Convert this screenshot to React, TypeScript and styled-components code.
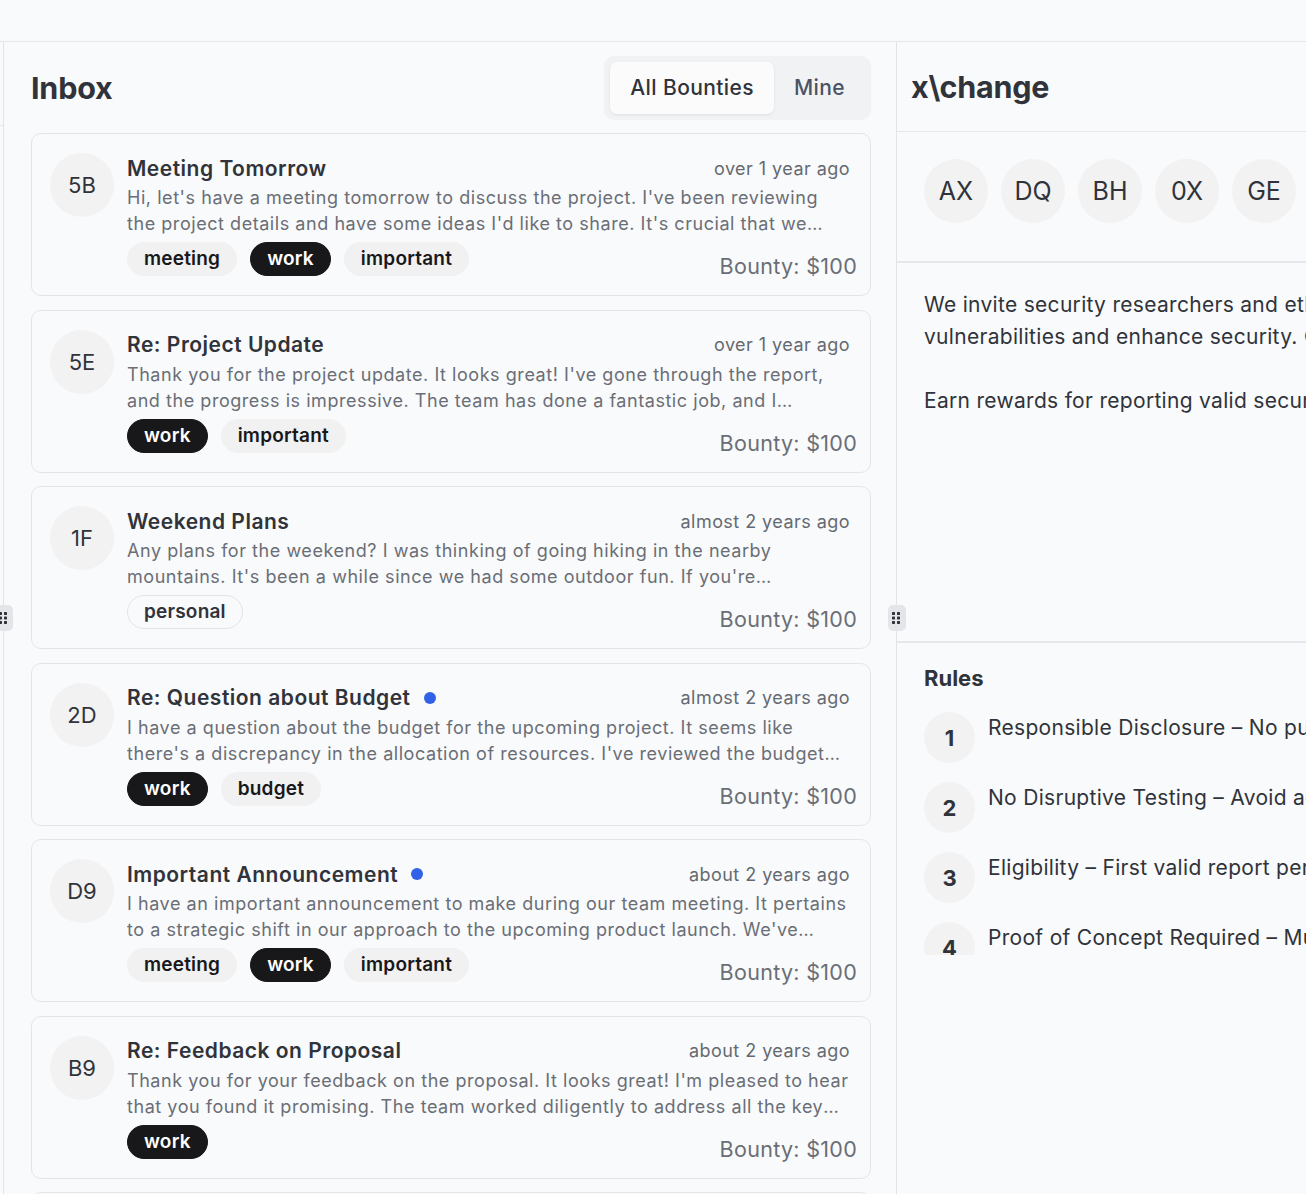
import React from "react";
import styled, { createGlobalStyle } from "styled-components";

const GlobalStyle = createGlobalStyle`
  html, body {
    margin: 0;
    padding: 0;
    background: #f9fafb;
    font-family: Inter, "Noto Sans", "Liberation Sans", sans-serif;
    color: #30333a;
    overflow: hidden;
  }
  * { box-sizing: border-box; }
`;

const Page = styled.div`
  width: 100vw;
  height: 100vh;
  display: flex;
  flex-direction: column;
  overflow: hidden;
`;

const TopBar = styled.div`
  height: 42px;
  flex-shrink: 0;
  border-bottom: 1px solid #e5e7eb;
`;

const Main = styled.div`
  flex: 1;
  display: flex;
  min-height: 0;
  overflow: hidden;
`;

const SidePanel = styled.div`
  width: 3px;
  flex-shrink: 0;
  display: flex;
  flex-direction: column;
`;

const SideHeader = styled.div`
  height: 84px;
  border-bottom: 1px solid #e5e7eb;
`;

const Divider = styled.div`
  width: 1px;
  flex-shrink: 0;
  background: #e2e4e7;
  position: relative;
`;

const Handle = styled.div`
  position: absolute;
  top: 50%;
  left: 50%;
  transform: translate(-50%, -50%);
  width: 18px;
  height: 26px;
  border-radius: 5px;
  background: #e4e5e8;
  display: flex;
  align-items: center;
  justify-content: center;
  z-index: 2;
`;

const InboxPanel = styled.div`
  width: 892px;
  flex-shrink: 0;
  display: flex;
  flex-direction: column;
  padding: 0 25px 0 27px;
  overflow: hidden;
`;

const InboxHeader = styled.div`
  height: 91px;
  flex-shrink: 0;
  display: flex;
  align-items: center;
  justify-content: space-between;
`;

const PanelTitle = styled.h1`
  margin: 0;
  font-size: 30.5px;
  line-height: 40px;
  font-weight: 700;
  color: #30333a;
  letter-spacing: -0.2px;
`;

const Tabs = styled.div`
  display: flex;
  height: 64px;
  padding: 6px;
  border-radius: 10px;
  background: #f1f2f4;
`;

const Tab = styled.button<{ $active?: boolean }>`
  border: none;
  font-family: inherit;
  height: 52px;
  padding: 0 20px;
  border-radius: 7px;
  font-size: 21px;
  letter-spacing: 0.4px;
  font-weight: 500;
  cursor: pointer;
  color: ${(p) => (p.$active ? "#30333a" : "#4a5366")};
  background: ${(p) => (p.$active ? "#fbfbfc" : "transparent")};
  box-shadow: ${(p) => (p.$active ? "0 1px 3px rgba(0,0,0,0.08)" : "none")};
`;

const CardList = styled.div`
  display: flex;
  flex-direction: column;
  gap: 13.5px;
`;

const Card = styled.div`
  flex-shrink: 0;
  display: flex;
  gap: 13px;
  padding: 19px 20px 19px 18px;
  border: 1px solid #e4e5e7;
  border-radius: 10px;
  background: #f9fafb;
`;

const Avatar = styled.div<{ $size: number; $font: number }>`
  width: ${(p) => p.$size}px;
  height: ${(p) => p.$size}px;
  flex-shrink: 0;
  border-radius: 50%;
  background: #f2f2f3;
  display: flex;
  align-items: center;
  justify-content: center;
  font-size: ${(p) => p.$font}px;
  color: #30333a;
`;

const CardBody = styled.div`
  flex: 1;
  min-width: 0;
  display: flex;
  flex-direction: column;
`;

const CardHead = styled.div`
  display: flex;
  align-items: center;
  justify-content: space-between;
  height: 30px;
`;

const TitleWrap = styled.div`
  display: flex;
  align-items: center;
  gap: 13px;
`;

const CardTitle = styled.span`
  font-size: 21px;
  letter-spacing: 0.5px;
  font-weight: 600;
  color: #30333a;
`;

const UnreadDot = styled.span`
  width: 12px;
  height: 12px;
  border-radius: 50%;
  background: #2f62e6;
`;

const Time = styled.span`
  font-size: 18px;
  letter-spacing: 0.45px;
  color: #656a72;
`;

const Preview = styled.p`
  margin: 2px 0 0;
  font-size: 18px;
  letter-spacing: 0.55px;
  line-height: 26px;
  color: #6a6e76;
  display: -webkit-box;
  -webkit-line-clamp: 2;
  -webkit-box-orient: vertical;
  overflow: hidden;
`;

const CardFoot = styled.div`
  margin-top: 5px;
  display: flex;
  align-items: flex-end;
  justify-content: space-between;
`;

const Tags = styled.div`
  display: flex;
  gap: 13px;
`;

const Tag = styled.span<{ $variant: "dark" | "light" | "outline" }>`
  height: 34px;
  line-height: 32px;
  padding: 0 16px;
  border-radius: 17px;
  font-size: 19px;
  letter-spacing: 0.2px;
  font-weight: 600;
  border: 1px solid
    ${(p) => (p.$variant === "dark" ? "#18181b" : p.$variant === "outline" ? "#e4e5e7" : "#f1f1f2")};
  background: ${(p) => (p.$variant === "dark" ? "#18181b" : p.$variant === "outline" ? "transparent" : "#f1f1f2")};
  color: ${(p) => (p.$variant === "dark" ? "#ffffff" : p.$variant === "outline" ? "#30333a" : "#18181b")};
`;

const Bounty = styled.span`
  font-size: 21.5px;
  letter-spacing: 0.3px;
  line-height: 20px;
  color: #6a6e76;
  margin-right: -7px;
`;

const DetailPanel = styled.div`
  width: 760px;
  flex-shrink: 0;
  display: flex;
  flex-direction: column;
`;

const DetailHeader = styled.div`
  height: 90px;
  flex-shrink: 0;
  display: flex;
  align-items: center;
  padding: 0 14px;
  border-bottom: 1px solid #e5e7eb;
`;

const AvatarRow = styled.div`
  flex-shrink: 0;
  display: flex;
  gap: 13px;
  padding: 27px 27px 38px;
  border-bottom: 2px solid #e5e7eb;
`;

const Description = styled.div`
  height: 380px;
  flex-shrink: 0;
  padding: 26px 27px;
  border-bottom: 2px solid #e5e7eb;
`;

const Para = styled.p`
  margin: 0 0 32px;
  font-size: 21px;
  letter-spacing: 0.3px;
  line-height: 32px;
  color: #30333a;
  white-space: nowrap;
`;

const RulesSection = styled.div`
  height: 312px;
  flex-shrink: 0;
  overflow: hidden;
  padding: 20px 27px 0;
`;

const RulesTitle = styled.h2`
  margin: 0 0 19px;
  font-size: 22px;
  line-height: 30px;
  font-weight: 700;
  color: #30333a;
`;

const RulesList = styled.ol`
  list-style: none;
  margin: 0;
  padding: 0;
  display: flex;
  flex-direction: column;
  gap: 19px;
`;

const RuleItem = styled.li`
  display: flex;
  align-items: flex-start;
  gap: 13px;
`;

const RuleNum = styled.span`
  width: 51px;
  height: 51px;
  flex-shrink: 0;
  border-radius: 50%;
  background: #f2f2f3;
  display: flex;
  align-items: center;
  justify-content: center;
  font-size: 22px;
  font-weight: 700;
  color: #30333a;
`;

const RuleText = styled.span`
  font-size: 21px;
  letter-spacing: 0.3px;
  line-height: 32px;
  color: #30333a;
  white-space: nowrap;
`;

const Grip = () => (
  <svg width="9" height="12" viewBox="0 0 9 12" fill="#2b2e35">
    {[0, 1, 2].map((r) =>
      [0, 1].map((c) => <rect key={`${r}${c}`} x={c * 5} y={r * 4.5} width="3" height="3" rx="0.8" />)
    )}
  </svg>
);

type TagV = "dark" | "light" | "outline";
const mails: {
  id: string;
  title: string;
  time: string;
  unread?: boolean;
  text: string;
  tags: [string, TagV][];
}[] = [
  {
    id: "5B",
    title: "Meeting Tomorrow",
    time: "over 1 year ago",
    text:
      "Hi, let's have a meeting tomorrow to discuss the project. I've been reviewing the project details and have some ideas I'd like to share. It's crucial that we align on our next steps to ensure the project's success.",
    tags: [
      ["meeting", "light"],
      ["work", "dark"],
      ["important", "light"],
    ],
  },
  {
    id: "5E",
    title: "Re: Project Update",
    time: "over 1 year ago",
    text:
      "Thank you for the project update. It looks great! I've gone through the report, and the progress is impressive. The team has done a fantastic job, and I appreciate the hard work everyone has put in.",
    tags: [
      ["work", "dark"],
      ["important", "light"],
    ],
  },
  {
    id: "1F",
    title: "Weekend Plans",
    time: "almost 2 years ago",
    text:
      "Any plans for the weekend? I was thinking of going hiking in the nearby mountains. It's been a while since we had some outdoor fun. If you're interested, let me know, and we can plan the details.",
    tags: [["personal", "outline"]],
  },
  {
    id: "2D",
    title: "Re: Question about Budget",
    time: "almost 2 years ago",
    unread: true,
    text:
      "I have a question about the budget for the upcoming project. It seems like there's a discrepancy in the allocation of resources. I've reviewed the budget report and identified a few areas where we might be able to optimize.",
    tags: [
      ["work", "dark"],
      ["budget", "light"],
    ],
  },
  {
    id: "D9",
    title: "Important Announcement",
    time: "about 2 years ago",
    unread: true,
    text:
      "I have an important announcement to make during our team meeting. It pertains to a strategic shift in our approach to the upcoming product launch. We've received valuable feedback from our beta testers.",
    tags: [
      ["meeting", "light"],
      ["work", "dark"],
      ["important", "light"],
    ],
  },
  {
    id: "B9",
    title: "Re: Feedback on Proposal",
    time: "about 2 years ago",
    text:
      "Thank you for your feedback on the proposal. It looks great! I'm pleased to hear that you found it promising. The team worked diligently to address all the key points you raised.",
    tags: [["work", "dark"]],
  },
  {
    id: "7C",
    title: "New Project Idea",
    time: "about 2 years ago",
    text:
      "I have an exciting new project idea to discuss with you. It involves expanding our services to target a niche market that has shown considerable growth in recent months.",
    tags: [["meeting", "light"]],
  },
];

const hunters = ["AX", "DQ", "BH", "0X", "GE", "KR", "MT"];

const rules = [
  "Responsible Disclosure – No public disclosure before the issue is resolved.",
  "No Disruptive Testing – Avoid actions that degrade service availability.",
  "Eligibility – First valid report per vulnerability receives the reward.",
  "Proof of Concept Required – Must include clear reproduction steps.",
  "Scope – Only listed assets are eligible for rewards.",
];

export default function App() {
  return (
    <>
      <GlobalStyle />
      <Page>
        <TopBar />
        <Main>
          <SidePanel>
            <SideHeader />
          </SidePanel>
          <Divider>
            <Handle>
              <Grip />
            </Handle>
          </Divider>
          <InboxPanel>
            <InboxHeader>
              <PanelTitle>Inbox</PanelTitle>
              <Tabs>
                <Tab $active>All Bounties</Tab>
                <Tab>Mine</Tab>
              </Tabs>
            </InboxHeader>
            <CardList>
              {mails.map((m) => (
                <Card key={m.id}>
                  <Avatar $size={64} $font={22}>
                    {m.id}
                  </Avatar>
                  <CardBody>
                    <CardHead>
                      <TitleWrap>
                        <CardTitle>{m.title}</CardTitle>
                        {m.unread && <UnreadDot />}
                      </TitleWrap>
                      <Time>{m.time}</Time>
                    </CardHead>
                    <Preview>{m.text}</Preview>
                    <CardFoot>
                      <Tags>
                        {m.tags.map(([t, v]) => (
                          <Tag key={t} $variant={v}>
                            {t}
                          </Tag>
                        ))}
                      </Tags>
                      <Bounty>Bounty: $100</Bounty>
                    </CardFoot>
                  </CardBody>
                </Card>
              ))}
            </CardList>
          </InboxPanel>
          <Divider>
            <Handle>
              <Grip />
            </Handle>
          </Divider>
          <DetailPanel>
            <DetailHeader>
              <PanelTitle>x\change</PanelTitle>
            </DetailHeader>
            <AvatarRow>
              {hunters.map((h) => (
                <Avatar key={h} $size={64} $font={25}>
                  {h}
                </Avatar>
              ))}
            </AvatarRow>
            <Description>
              <Para>
                We invite security researchers and ethical hackers to help us identify
                <br />
                vulnerabilities and enhance security. Our program is open to everyone.
              </Para>
              <Para>Earn rewards for reporting valid security issues in our products.</Para>
            </Description>
            <RulesSection>
              <RulesTitle>Rules</RulesTitle>
              <RulesList>
                {rules.map((r, i) => (
                  <RuleItem key={r}>
                    <RuleNum>{i + 1}</RuleNum>
                    <RuleText>{r}</RuleText>
                  </RuleItem>
                ))}
              </RulesList>
            </RulesSection>
          </DetailPanel>
        </Main>
      </Page>
    </>
  );
}
